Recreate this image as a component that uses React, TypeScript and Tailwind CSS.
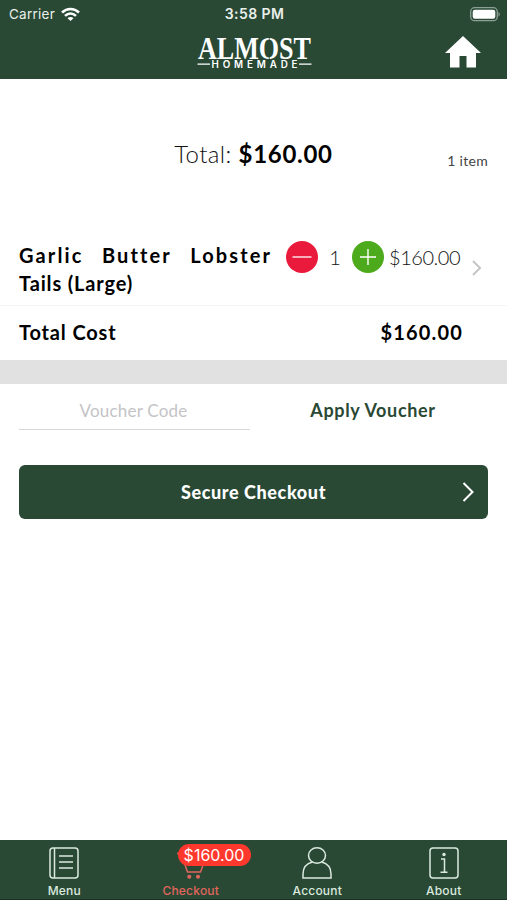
import type { ReactNode } from "react";

export default function App() {
  return (
    <div className="flex h-[900px] w-[507px] flex-col overflow-hidden bg-white font-['Lato',sans-serif] text-[#111]">
      {/* Header */}
      <header className="h-[79px] shrink-0 bg-[#294935] text-white">
        <div className="grid h-7 grid-cols-3 items-center pl-[9px] pr-[7px] font-['Inter',sans-serif] text-[13.5px] leading-7 text-[#e9efea]">
          <div className="flex items-center gap-[6px]">
            <span className="tracking-[0.25px]">Carrier</span>
            <WifiIcon />
          </div>
          <span className="text-center text-[14px] font-semibold tracking-[0.4px]">3:58 PM</span>
          <div className="flex justify-end">
            <BatteryIcon />
          </div>
        </div>
        <div className="grid h-[51px] grid-cols-[1fr_116px_1fr] items-start pr-[26px] pl-[26px]">
          <span />
          <Logo />
          <div className="flex justify-end pt-2">
            <HomeIcon />
          </div>
        </div>
      </header>

      {/* Order total */}
      <section className="grid h-[152px] shrink-0 grid-cols-[1fr_auto_1fr] items-center px-[19px] pb-[2px]">
        <span />
        <h1 className="text-[24px] leading-[30px] font-light tracking-[0.4px]">
          Total: <span className="font-bold tracking-[0.7px] text-black">$160.00</span>
        </h1>
        <span className="pt-[13px] text-right text-[14px] tracking-[0.3px] text-[#444]">1 item</span>
      </section>

      {/* Cart item */}
      <section className="flex h-[75px] shrink-0 border-b border-[#f4f4f4] pt-[10px] pl-[19px] text-[20px] leading-7">
        <div className="w-[267px] font-bold text-black">
          <div className="flex w-[253px] justify-between tracking-[2.1px]">
            <span>Garlic</span>
            <span>Butter</span>
            <span>Lobster</span>
          </div>
          <div className="tracking-[0.85px]">Tails (Large)</div>
        </div>
        <button className="flex size-8 items-center justify-center rounded-full bg-[#e91a3c]">
          <svg width="20" height="20" stroke="white" strokeWidth="1.3">
            <path d="M.5 10h19" />
          </svg>
        </button>
        <span className="w-[34px] pt-[2px] text-center font-light">1</span>
        <button className="flex size-8 items-center justify-center rounded-full bg-[#4caa1c]">
          <svg width="16" height="16" stroke="white" strokeWidth="1.4">
            <path d="M0 8h16M8 0v16" />
          </svg>
        </button>
        <span className="w-[88px] pt-[2px] pl-[5px] font-light tracking-[-0.45px]">$160.00</span>
        <svg className="mt-[19px]" width="10" height="16" fill="none" stroke="#c5c5c8" strokeWidth="2">
          <path d="m1 1 7 7-7 7" />
        </svg>
      </section>

      <section className="flex h-[54px] shrink-0 items-center justify-between pr-[44px] pb-[2px] pl-[19px] text-[20px] font-bold text-black">
        <span className="tracking-[0.85px]">Total Cost</span>
        <span className="tracking-[1.15px]">$160.00</span>
      </section>

      <div className="h-[24px] shrink-0 bg-[#e1e1e2]" />

      {/* Voucher */}
      <section className="flex h-[46px] shrink-0 pl-[19px]">
        <div className="w-[231px] border-b border-[#d9d9dc] pt-[12px] pr-[2px] text-center text-[17px] leading-[30px] tracking-[0.2px] text-[#c4c4c7]">
          Voucher Code
        </div>
        <button className="w-[246px] pb-[2px] text-center text-[18px] leading-[34px] font-bold tracking-[0.65px] text-[#294935]">
          <span className="block pt-[7px]">Apply Voucher</span>
        </button>
      </section>

      <section className="h-[410px] shrink-0 px-[19px] pt-[35px]">
        <button className="grid h-[54px] w-full grid-cols-[1fr_auto_1fr] items-center rounded-[6px] bg-[#294935] pr-[14px] pl-[14px] text-[18px] font-black text-white">
          <span />
          <span className="tracking-[0.6px]">Secure Checkout</span>
          <svg className="justify-self-end" width="12" height="20" fill="none" stroke="white" strokeWidth="2">
            <path d="m1.5 1 9 9-9 9" />
          </svg>
        </button>
      </section>

      {/* Tab bar */}
      <nav className="grid h-[60px] shrink-0 grid-cols-4 border-b border-[#1c2f23] bg-[#294935] pl-px text-[#dbe9df]">
        <Tab label="Menu">
          <rect x="1" y="1" width="28" height="30" rx="3" />
          <path d="M5.500 1v30M10 9h14M10 15h14M10 21h14" />
        </Tab>
        <div className="relative text-[#e1655c]">
          <Tab label="Checkout">
            <path d="M1 6.500h4L11.500 25h13L27.500 17" />
            <circle cx="13.300" cy="29.700" r="1.300" fill="currentColor" />
            <circle cx="22" cy="29.700" r="1.300" fill="currentColor" />
          </Tab>
          <span className="absolute top-1 left-[50px] flex h-[22px] w-[73px] items-center justify-center rounded-full bg-[#ff382d] font-['Inter',sans-serif] text-[16px] text-white">
            $160.00
          </span>
        </div>
        <Tab label="Account">
          <ellipse cx="15" cy="8.500" rx="8.500" ry="7.700" />
          <path d="M10.500 15C4.500 16.500 1 21 1 27v4h28v-4c0-6-3.500-10.500-9.500-12" />
        </Tab>
        <Tab label="About">
          <rect x="1" y="1" width="28" height="30" rx="3" />
          <path d="M12 12h3.500v13M11.500 25.200h7" />
          <circle cx="15" cy="7.500" r="1" fill="currentColor" />
        </Tab>
      </nav>
    </div>
  );
}

function Tab({ label, children }: { label: string; children: ReactNode }) {
  return (
    <button className="flex w-full flex-col items-center pt-[7px]">
      <svg width="30" height="32" viewBox="0 0 30 32" fill="none" stroke="currentColor" strokeWidth="1.5">
        {children}
      </svg>
      <span className="mt-[4px] font-['Inter',sans-serif] text-[12px] leading-4 font-medium tracking-[0.2px]">{label}</span>
    </button>
  );
}

function Logo() {
  return (
    <svg className="overflow-visible" width="116" height="46" viewBox="0 0 116 46" fill="white">
      <text x="2" y="30.800" fontFamily="Liberation Serif, serif" fontSize="31" fontWeight="700" textLength="113" lengthAdjust="spacingAndGlyphs">ALMOST</text>
      {/* stencil cut through the O */}
      <path d="M73.300 9v24" stroke="#294935" strokeWidth=".8" />
      <text x="15.500" y="39.800" fontFamily="Inter, sans-serif" fontSize="9.800" fontWeight="600" textLength="86" lengthAdjust="spacing">HOMEMADE</text>
      <path d="M1.500 35.500h12.500v1.300H1.500zM103 35.500h12.500v1.300H103z" />
    </svg>
  );
}

function WifiIcon() {
  return (
    <svg width="19" height="15" viewBox="0 0 19 15" fill="none" stroke="white" strokeWidth="2.600">
      <path d="M1 5.500c5-4.700 12-4.700 17 0M4 8.900c3.300-3 7.700-3 11 0" />
      <path d="M9.500 14 6.500 11.200c1.700-1.500 4.300-1.500 6 0z" fill="white" stroke="none" />
    </svg>
  );
}

function BatteryIcon() {
  return (
    <svg width="30" height="15" viewBox="0 0 30 15">
      <rect x=".7" y=".7" width="26.600" height="13" rx="4" fill="none" stroke="#8da095" strokeWidth="1.300" />
      <rect x="2.700" y="2.700" width="22.600" height="9" rx="2.200" fill="white" />
      <path d="M28.500 5c1.700.8 1.700 3.700 0 4.500z" fill="#8da095" />
    </svg>
  );
}

function HomeIcon() {
  return (
    <svg width="36" height="32" viewBox="0 0 36 32" fill="white">
      <path d="M18 0 36 17h-5v14.500h-9.500V20h-7v11.500H5V17H0z" />
    </svg>
  );
}
